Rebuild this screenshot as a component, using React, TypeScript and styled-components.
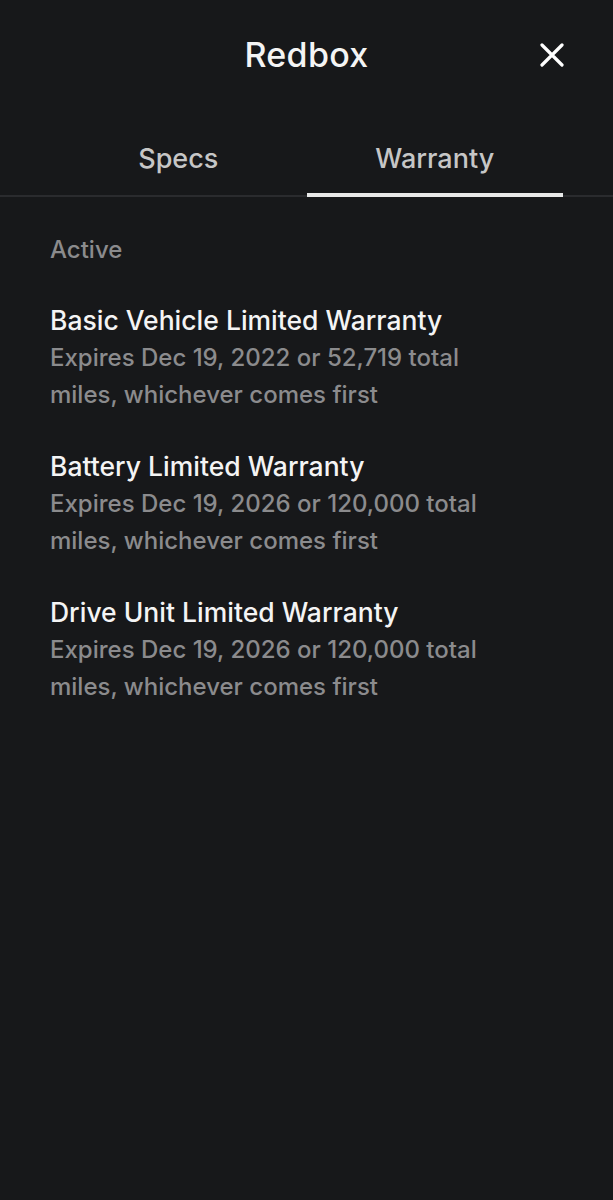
import React from "react";
import styled, { createGlobalStyle } from "styled-components";

const Global = createGlobalStyle`
  html, body { margin: 0; padding: 0; background: #17181a; }
  body { font-family: Inter, "Liberation Sans", Arial, sans-serif; -webkit-font-smoothing: antialiased; }
`;

const Page = styled.div`
  width: 613px;
  min-height: 1200px;
  background: #17181a;
  color: #fff;
  display: flex;
  flex-direction: column;
`;

const Header = styled.header`
  position: relative;
  height: 108px;
  display: flex;
  align-items: center;
  justify-content: center;
`;

const Title = styled.h1`
  margin: 0;
  font-size: 34px;
  font-weight: 500;
  color: #f4f4f4;
  letter-spacing: 0.3px;
`;

const CloseButton = styled.button`
  position: absolute;
  right: 46px;
  top: 40px;
  width: 30px;
  height: 30px;
  padding: 0;
  border: 0;
  background: transparent;
  display: flex;
  align-items: center;
  justify-content: center;
  cursor: pointer;
`;

const TabBar = styled.nav`
  display: flex;
  padding: 0 50px;
  border-bottom: 2px solid #2a2b2e;
`;

const Tab = styled.div<{ $active?: boolean }>`
  flex: 1;
  height: 89px;
  box-sizing: border-box;
  display: flex;
  align-items: center;
  justify-content: center;
  padding-top: 16px;
  font-size: 27px;
  font-weight: 500;
  color: #c6c6c6;
  border-bottom: 4px solid ${(p) => (p.$active ? "#e8e8e8" : "transparent")};
  margin-bottom: -2px;
`;

const Content = styled.section`
  padding: 38px 50px 0;
  display: flex;
  flex-direction: column;
`;

const SectionLabel = styled.div`
  font-size: 24px;
  font-weight: 500;
  color: #8b8b8d;
  line-height: 30px;
  margin-bottom: 36px;
`;

const List = styled.div`
  display: flex;
  flex-direction: column;
  gap: 34px;
`;

const Item = styled.div`
  display: flex;
  flex-direction: column;
`;

const ItemTitle = styled.div`
  font-size: 26.5px;
  font-weight: 500;
  color: #f4f4f4;
  line-height: 38px;
`;

const ItemText = styled.div`
  font-size: 24px;
  font-weight: 500;
  color: #8b8b8d;
  line-height: 37px;
  max-width: 450px;
`;

const items = [
  {
    title: "Basic Vehicle Limited Warranty",
    text: "Expires Dec 19, 2022 or 52,719 total miles, whichever comes first",
  },
  {
    title: "Battery Limited Warranty",
    text: "Expires Dec 19, 2026 or 120,000 total miles, whichever comes first",
  },
  {
    title: "Drive Unit Limited Warranty",
    text: "Expires Dec 19, 2026 or 120,000 total miles, whichever comes first",
  },
];

export default function App() {
  return (
    <Page>
      <Global />
      <Header>
        <Title>Redbox</Title>
        <CloseButton aria-label="Close">
          <svg width="24" height="24" viewBox="0 0 24 24">
            <path d="M2 2 L22 22 M22 2 L2 22" stroke="#fff" strokeWidth="3.2" strokeLinecap="round" />
          </svg>
        </CloseButton>
      </Header>
      <TabBar>
        <Tab>Specs</Tab>
        <Tab $active>Warranty</Tab>
      </TabBar>
      <Content>
        <SectionLabel>Active</SectionLabel>
        <List>
          {items.map((it) => (
            <Item key={it.title}>
              <ItemTitle>{it.title}</ItemTitle>
              <ItemText>{it.text}</ItemText>
            </Item>
          ))}
        </List>
      </Content>
    </Page>
  );
}
